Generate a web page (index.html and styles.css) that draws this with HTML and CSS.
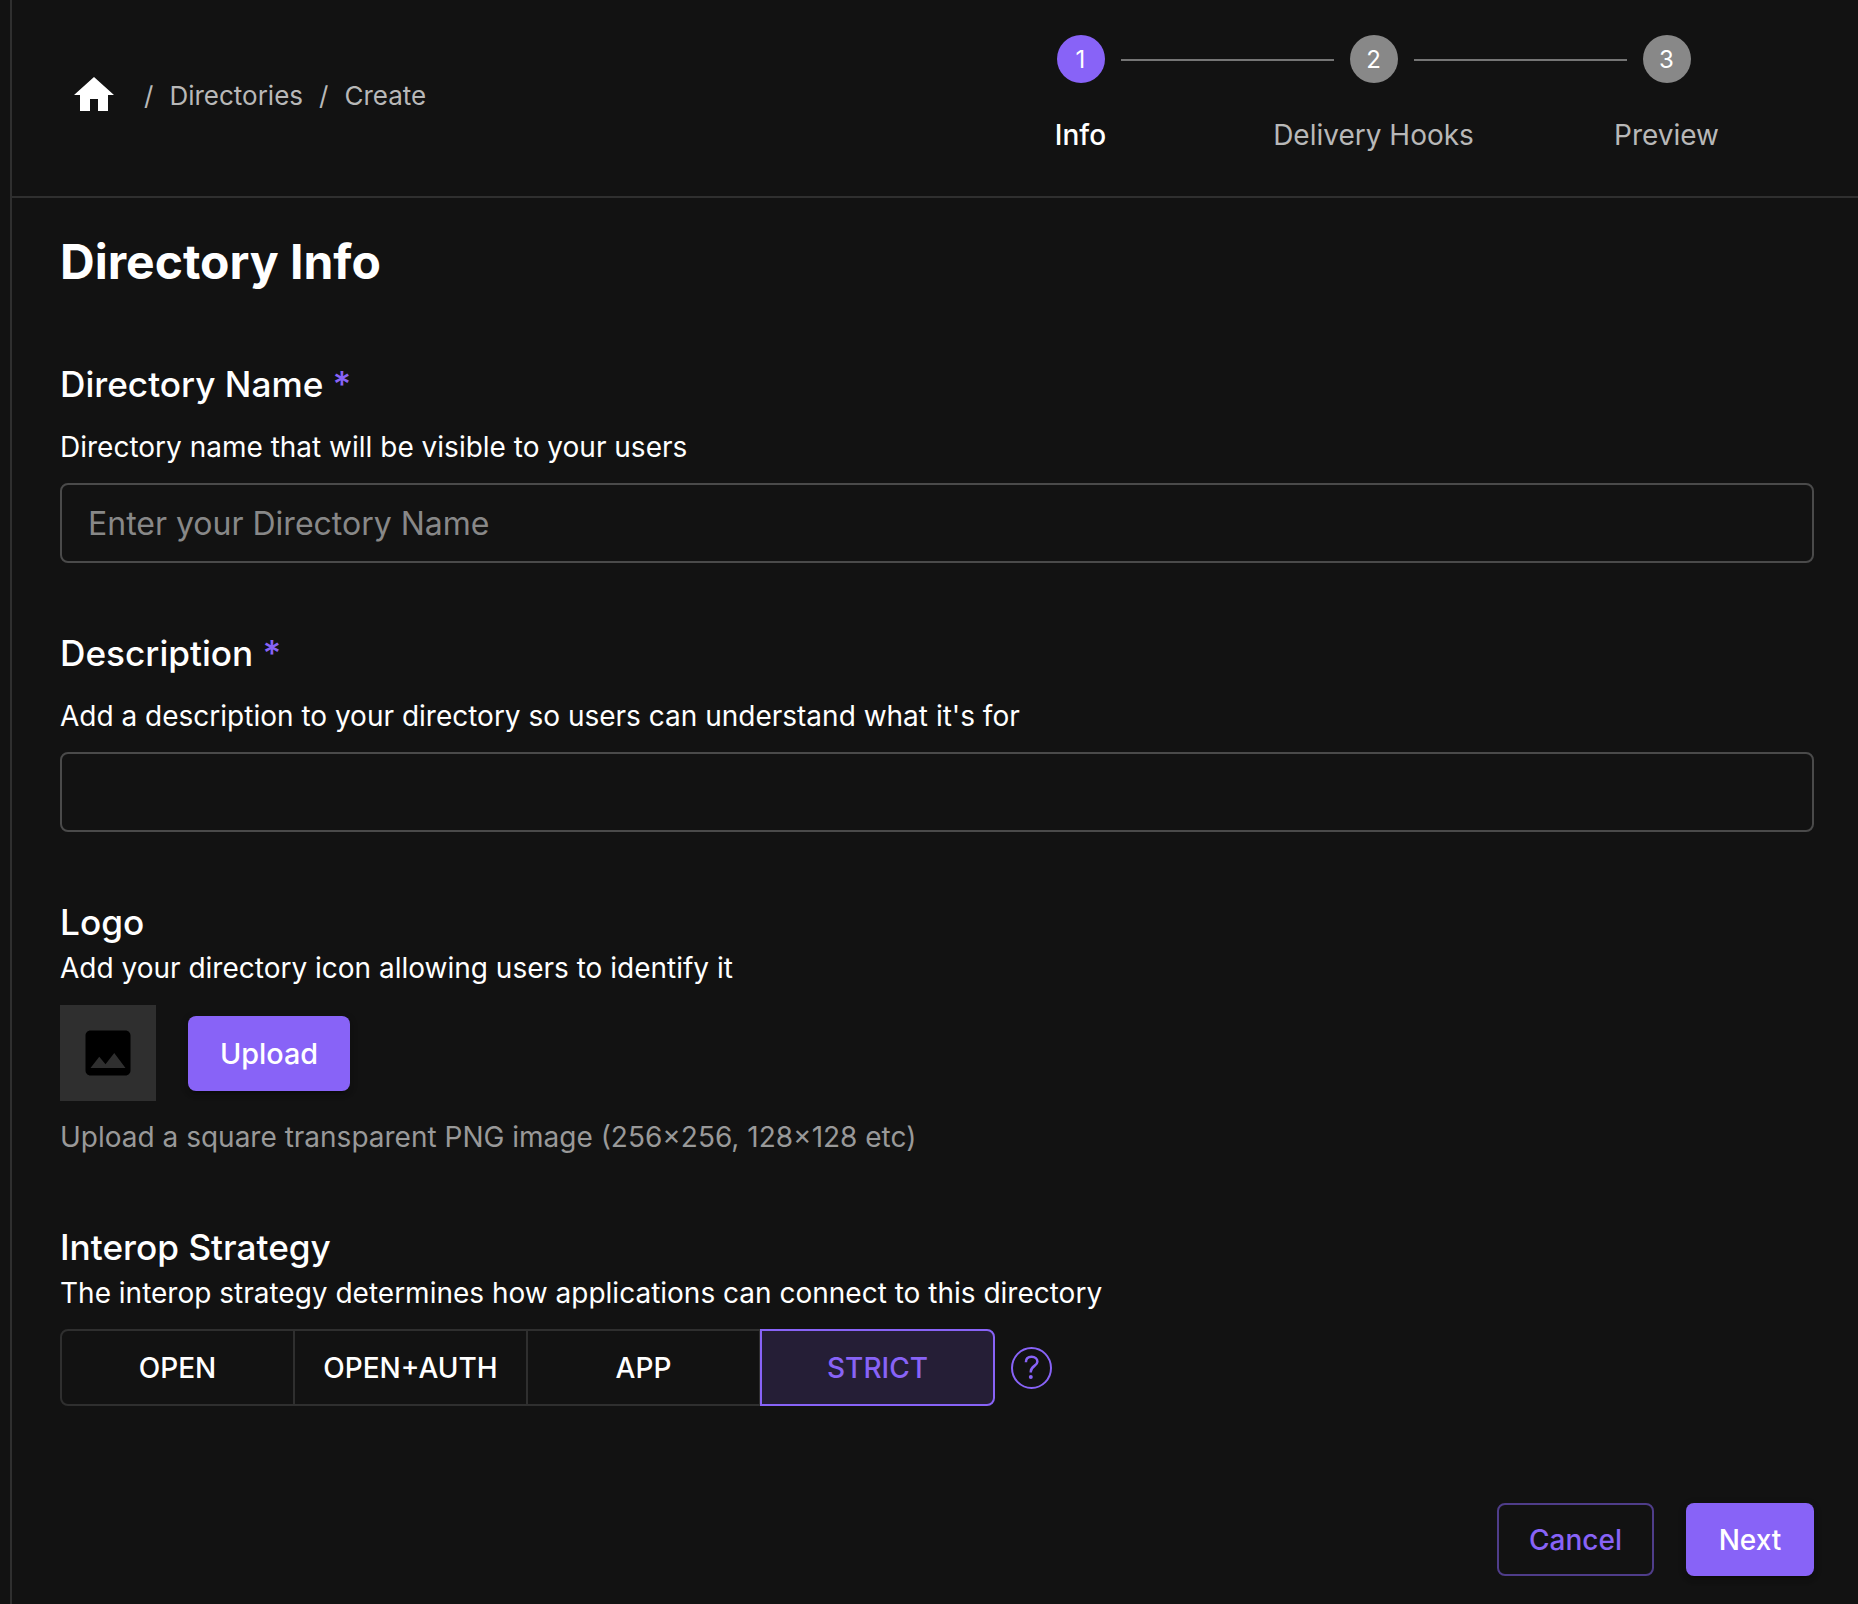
FILE: index.html
```html
<!DOCTYPE html>
<html lang="en">
<head>
<meta charset="utf-8">
<title>Directory Info</title>
<link rel="stylesheet" href="styles.css">
</head>
<body>
<div class="panel">
  <header class="header">
    <nav class="breadcrumbs">
      <svg class="home" viewBox="0 0 24 24"><path d="M10 20v-6h4v6h5v-8h3L12 3 2 12h3v8z"/></svg>
      <span class="sep">/</span>
      <a class="crumb">Directories</a>
      <span class="sep">/</span>
      <a class="crumb">Create</a>
    </nav>
    <ol class="stepper">
      <li class="step active"><span class="dot">1</span><span class="step-label">Info</span></li>
      <li class="step"><span class="dot">2</span><span class="step-label">Delivery Hooks</span></li>
      <li class="step"><span class="dot">3</span><span class="step-label">Preview</span></li>
    </ol>
  </header>
  <main class="content">
    <h1 class="title">Directory Info</h1>

    <section class="field">
      <h2 class="label">Directory Name <span class="required">*</span></h2>
      <p class="hint spaced">Directory name that will be visible to your users</p>
      <input class="input" type="text" placeholder="Enter your Directory Name">
    </section>

    <section class="field">
      <h2 class="label">Description <span class="required">*</span></h2>
      <p class="hint spaced">Add a description to your directory so users can understand what it's for</p>
      <input class="input" type="text">
    </section>

    <section class="field logo">
      <h2 class="label">Logo</h2>
      <p class="hint">Add your directory icon allowing users to identify it</p>
      <div class="upload-row">
        <div class="thumb">
          <svg class="image-icon" viewBox="0 0 24 24"><path d="M21 19V5c0-1.1-.9-2-2-2H5c-1.1 0-2 .9-2 2v14c0 1.1.9 2 2 2h14c1.1 0 2-.9 2-2zM8.500 13.500l2.500 3.010L14.500 12l4.500 6H5l3.500-4.500z"/></svg>
        </div>
        <button class="button primary upload">Upload</button>
      </div>
      <p class="caption">Upload a square transparent PNG image (256×256, 128×128 etc)</p>
    </section>

    <section class="field strategy">
      <h2 class="label">Interop Strategy</h2>
      <p class="hint">The interop strategy determines how applications can connect to this directory</p>
      <div class="toggle-row">
        <div class="toggles">
          <button class="toggle">OPEN</button>
          <button class="toggle">OPEN+AUTH</button>
          <button class="toggle">APP</button>
          <button class="toggle selected">STRICT</button>
        </div>
        <svg class="help" viewBox="0 0 41 42">
          <ellipse cx="20.500" cy="21" rx="19.500" ry="20"/>
          <path d="M14.900 15.200c0-3.600 2.300-5.400 5.700-5.400s5.800 2 5.800 4.900c0 4.300-6.600 4.200-6.600 9.800v1"/>
          <circle class="help-dot" cx="19.800" cy="30" r="2"/>
        </svg>
      </div>
    </section>

    <footer class="actions">
      <button class="button outlined">Cancel</button>
      <button class="button primary next">Next</button>
    </footer>
  </main>
</div>
</body>
</html>
```
FILE: styles.css
```css
* { box-sizing: border-box; }

body {
  margin: 0;
  background: #121212;
  color: #fff;
  font-family: Inter, "Liberation Sans", sans-serif;
}

h1, h2, p, ol { margin: 0; padding: 0; }
button, input { font-family: inherit; }

.panel {
  margin-left: 10px;
  height: 1604px;
  border-left: 2px solid #2f2f2f;
  overflow: hidden;
}

.header {
  display: flex;
  justify-content: space-between;
  height: 198px;
  padding: 35px 45px 0 58px;
  border-bottom: 2px solid #2f2f2f;
}

.breadcrumbs {
  display: flex;
  align-items: center;
  height: 48px;
  margin-top: 36px;
  font-size: 26px;
  color: #b8b8b8;
}
.home { width: 48px; height: 48px; fill: #fff; margin-right: 10px; }
.sep { margin: 0 16px; }
.sep, .crumb { line-height: 46px; padding-top: 2px; }

.stepper { display: flex; list-style: none; }
.step {
  position: relative;
  display: flex;
  flex-direction: column;
  align-items: center;
  width: 293px;
}
.dot {
  width: 48px;
  height: 48px;
  border-radius: 50%;
  background: #888;
  font-size: 24px;
  line-height: 50px;
  text-align: center;
}
.active .dot { background: #8863f7; }
.step-label {
  margin-top: 32px;
  font-size: 28px;
  line-height: 40px;
  color: #b8b8b8;
}
.active .step-label { color: #fff; font-weight: 500; }
.step + .step::before {
  content: "";
  position: absolute;
  top: 24px;
  left: -106px;
  width: 213px;
  height: 2px;
  background: #757575;
}

.content { padding: 36px 44px 0 48px; }
.title { font-size: 48px; line-height: 56px; font-weight: 700; }

.field { margin-top: 68px; }
.title + .field { margin-top: 72px; }
.label {
  font-size: 35.2px;
  line-height: 44px;
  font-weight: 500;
}
.required { color: #8863f7; }
.hint { margin-top: 4px; font-size: 28px; line-height: 40px; }
.hint.spaced { margin-top: 21px; }

.input {
  display: block;
  width: 100%;
  height: 80px;
  margin-top: 16px;
  padding: 0 26px;
  border: 2px solid #4a4a4a;
  border-radius: 8px;
  background: transparent;
  color: #fff;
  font-size: 32px;
}
.input::placeholder { color: #888; opacity: 1; }

.upload-row { display: flex; align-items: center; gap: 32px; margin-top: 17px; }
.thumb {
  display: grid;
  place-items: center;
  width: 96px;
  height: 96px;
  background: #2f2f2f;
}
.image-icon { width: 60px; height: 60px; fill: #000; }
.caption { margin-top: 16px; font-size: 28px; line-height: 40px; color: #999; }

.button {
  height: 73px;
  padding: 0;
  border: 0;
  border-radius: 8px;
  font-size: 28px;
  font-weight: 500;
}
.primary {
  background: #8863f7;
  color: #fff;
  box-shadow: 0 6px 2px -4px rgba(0,0,0,.2), 0 4px 4px rgba(0,0,0,.14), 0 2px 10px rgba(0,0,0,.12);
}
.upload { width: 162px; height: 75px; font-size: 28.8px; }
.next { width: 128px; }
.outlined { width: 157px; border: 2px solid #4f3d8a; background: transparent; color: #8863f7; }

.strategy { margin-top: 68px; }
.toggle-row { display: flex; align-items: center; gap: 16px; margin-top: 16px; }
.toggles { display: flex; }
.toggle {
  width: 235px;
  height: 77px;
  padding: 0;
  border: 2px solid #2f2f2f;
  background: transparent;
  color: #fff;
  font-size: 28px;
  font-weight: 500;
}
.toggle + .toggle { margin-left: -2px; }
.toggle:first-child { border-radius: 8px 0 0 8px; }
.toggle:last-child { border-radius: 0 8px 8px 0; }
.toggle + .toggle.selected {
  margin-left: -1px;
  border-color: #8863f7;
  background: #251e36;
  color: #8863f7;
}

.help {
  width: 41px;
  height: 42px;
  fill: none;
  stroke: #8863f7;
  stroke-width: 2;
}
.help path { stroke-width: 2.5; }
.help .help-dot { fill: #8863f7; stroke: none; }

.actions { display: flex; justify-content: flex-end; gap: 32px; margin-top: 97px; }
```
